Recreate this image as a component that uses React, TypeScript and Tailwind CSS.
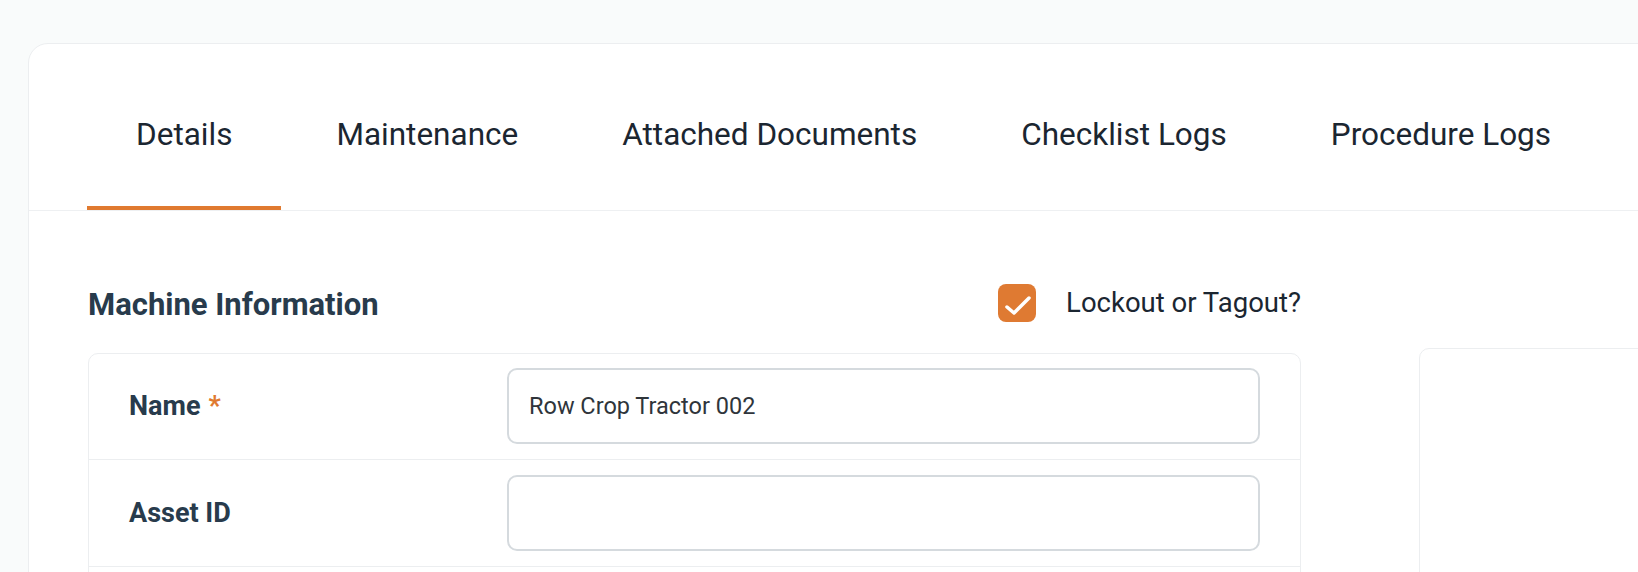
import { useState } from "react";

const tabs = [
  "Details",
  "Maintenance",
  "Attached Documents",
  "Checklist Logs",
  "Procedure Logs",
];

export default function App() {
  const [active, setActive] = useState("Details");
  const [lockout, setLockout] = useState(true);

  return (
    <div className="h-[572px] w-full overflow-hidden bg-[#f9fbfb] font-['Roboto',sans-serif]">
      <div className="pl-[28px] pt-[43px]">
        <div className="min-h-[620px] w-[1700px] rounded-tl-[20px] border border-[#eceef0] bg-white">
          <nav className="flex gap-[6px] border-b border-[#eef0f2] pl-[58px] pt-[24px]">
            {tabs.map((tab) => (
              <button
                key={tab}
                onClick={() => setActive(tab)}
                className={
                  tab === active
                    ? "border-b-4 border-[#e07a30] px-[49px] pb-[53px] pt-[49px] text-[31.5px] leading-[36px] text-[#1b2631]"
                    : "border-b-4 border-transparent px-[49px] pb-[53px] pt-[49px] text-[31.5px] leading-[36px] text-[#1b2631]"
                }
              >
                {tab}
              </button>
            ))}
          </nav>

          <div className="flex gap-[118px] pl-[59px] pt-[73px]">
            <section className="w-[1213px] shrink-0">
              <div className="flex h-[38px] items-center justify-between">
                <h2 className="pt-[3px] text-[31px] font-bold leading-[36px] text-[#283b4c]">
                  Machine Information
                </h2>
                <label className="flex cursor-pointer items-center gap-[30px]">
                  <button
                    onClick={() => setLockout(!lockout)}
                    className={
                      lockout
                        ? "flex h-[38px] w-[38px] items-center justify-center rounded-[8px] bg-[#df7a32]"
                        : "flex h-[38px] w-[38px] items-center justify-center rounded-[8px] border-2 border-[#d0d5da] bg-white"
                    }
                  >
                    {lockout ? (
                      <svg width="38" height="38" viewBox="0 0 38 38" fill="none">
                        <path
                          d="M9 23 L16 29 L31 14"
                          stroke="white"
                          strokeWidth="3.5"
                          strokeLinecap="round"
                          strokeLinejoin="round"
                        />
                      </svg>
                    ) : null}
                  </button>
                  <span className="text-[27.5px] leading-[32px] text-[#1b2631]">
                    Lockout or Tagout?
                  </span>
                </label>
              </div>

              <div className="mt-[31px] min-h-[320px] rounded-[10px] border border-[#eceef0]">
                <FieldRow label="Name" required value="Row Crop Tractor 002" />
                <FieldRow label="Asset ID" value="" />
              </div>
            </section>

            <aside className="mt-[64px] h-[400px] w-[300px] shrink-0 rounded-[10px] border border-[#eceef0]" />
          </div>
        </div>
      </div>
    </div>
  );
}

function FieldRow({
  label,
  required = false,
  value,
}: {
  label: string;
  required?: boolean;
  value: string;
}) {
  return (
    <div className="grid grid-cols-[418px_1fr] items-center border-b border-[#eceef0] py-[15px] pr-[40px] first:pt-[14px]">
      <div className="pl-[40px] text-[27px] font-bold text-[#283b4c]">
        {label}
        {required ? <span className="ml-[8px] text-[#e07a30]">*</span> : null}
      </div>
      <input
        defaultValue={value}
        className="h-[76px] w-full rounded-[10px] border-2 border-[#d5dade] px-[20px] text-[23.5px] text-[#2f353b] outline-none"
      />
    </div>
  );
}
